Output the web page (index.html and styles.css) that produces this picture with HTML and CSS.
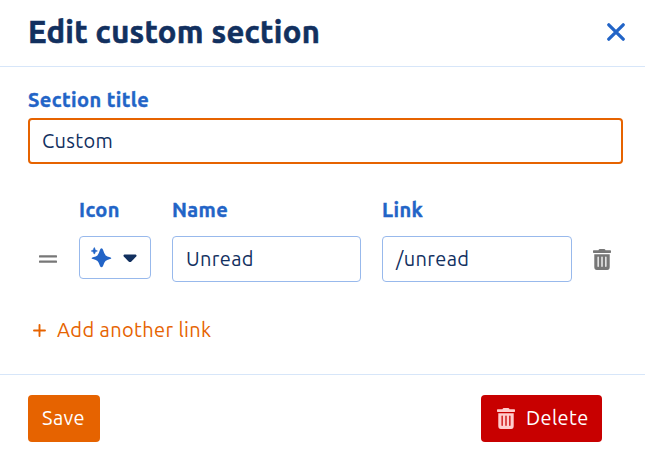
FILE: index.html
```html
<!DOCTYPE html>
<html lang="en">
<head>
<meta charset="utf-8">
<title>Edit custom section</title>
<link rel="stylesheet" href="styles.css">
</head>
<body>
<svg class="defs" width="0" height="0" aria-hidden="true">
  <symbol id="trash" viewBox="0 0 448 512" preserveAspectRatio="none"><path d="M32 440a64 72 0 0 0 64 72h256a64 72 0 0 0 64-72V128H32zm272-242a16 16 0 0 1 32 0v224a16 16 0 0 1-32 0zm-96 0a16 16 0 0 1 32 0v224a16 16 0 0 1-32 0zm-96 0a16 16 0 0 1 32 0v224a16 16 0 0 1-32 0zM432 32H312l-9.400-18.700A24 24 0 0 0 281.100 0H166.800a23.720 23.720 0 0 0-21.400 13.300L136 32H16A16 16 0 0 0 0 48v32a16 16 0 0 0 16 16h416a16 16 0 0 0 16-16V48a16 16 0 0 0-16-16z"/></symbol>
</svg>
<div class="modal">
  <header class="header">
    <h1>Edit custom section</h1>
    <button class="close" aria-label="Close"><svg width="18" height="18" viewBox="0 0 17 17"><path d="M1.700 1.700l13.600 13.600M15.300 1.700L1.700 15.300"/></svg></button>
  </header>
  <main class="body">
    <label class="label">Section title</label>
    <div class="input focused">Custom</div>
    <div class="grid">
      <span></span>
      <span class="label">Icon</span>
      <span class="label">Name</span>
      <span class="label">Link</span>
      <span></span>
      <svg class="drag" width="18" height="8" viewBox="0 0 18 8"><path d="M1 1.400h16M1 6.600h16"/></svg>
      <button class="picker">
        <svg width="22" height="21" viewBox="0 0 22 21"><path class="spark" d="M11.500 1.200Q12.600 1.200 13 2.800Q14.300 7.300 15.800 8.500Q16.900 9.500 20 10.300Q21.300 10.800 21.300 11.200Q21.300 11.600 20 12.100Q16.900 12.900 15.500 14.100Q14.400 15.100 13 19Q12.400 20.300 11.500 20.300Q10.500 20.300 10 19Q8.600 15.100 7.500 14.100Q6.300 12.900 3 12.100Q1.600 11.600 1.600 11.200Q1.600 10.800 3 10.300Q6.300 9.500 7.400 8.400Q8.700 7.300 10 2.800Q10.400 1.200 11.500 1.200Z"/><path class="spark small" d="M4.300.6Q4.800.6 5 2L5.400 3.100L7.200 3.700Q7.800 4 7.200 4.300L5.400 4.800L5 6.500Q4.300 7.300 3.700 6.500L3.200 4.800L1.400 4.300Q.8 4 1.400 3.700L3.200 3.100L3.700 1.500Q3.900.6 4.300.6Z"/></svg>
        <svg class="caret" width="14" height="9" viewBox="0 0 14 9"><path d="M1.400.5h11.200q1.600.6.6 2.100L8.400 7.500q-1.400 1-2.800 0L.8 2.600Q-.2 1.100 1.400.5z"/></svg>
      </button>
      <div class="input">Unread</div>
      <div class="input">/unread</div>
      <button class="remove" aria-label="Remove"><svg class="trash" width="18" height="21"><use href="#trash"/></svg></button>
    </div>
    <button class="add"><svg width="13" height="13" viewBox="0 0 13 13"><path d="M6.500 1v11M1 6.500h11"/></svg><span>Add another link</span></button>
  </main>
  <footer class="footer">
    <button class="btn save">Save</button>
    <button class="btn delete"><svg class="trash" width="18" height="21"><use href="#trash"/></svg><span>Delete</span></button>
  </footer>
</div>
</body>
</html>
```
FILE: styles.css
```css
* { box-sizing: border-box; }
body { margin: 0; background: #fff; color: #12305f; font: 20px/24px Ubuntu, "Noto Sans", sans-serif; letter-spacing: .38px; }
button { font: inherit; letter-spacing: inherit; border: 0; background: none; padding: 0; }
svg { display: block; flex: none; }
.defs { position: absolute; }
.modal { width: 645px; height: 459px; display: flex; flex-direction: column; }
.header { height: 67px; border-bottom: 1px solid #d7e6f9; display: flex; justify-content: space-between; align-items: center; padding: 0 20px 3px 28px; }
h1 { margin: 0; font-size: 31px; line-height: 36px; font-weight: 700; letter-spacing: .32px; white-space: nowrap; -webkit-text-stroke: .6px #12305f; }
.close { stroke: #2264c7; stroke-width: 3.100; stroke-linecap: round; fill: none; }
.body { height: 307px; padding: 21px 22px 0 28px; }
.label { display: block; font-weight: 700; color: #2264c7; letter-spacing: .42px; white-space: nowrap; -webkit-text-stroke: .4px #2264c7; }
.input { height: 46px; border: 1px solid #98b9ec; border-radius: 4px; display: flex; align-items: center; padding: 0 13px 1px; white-space: nowrap; }
.focused { border: 2px solid #e66300; margin-top: 6px; padding-left: 12px; }
.grid { display: grid; grid-template-columns: 51px 93px 210px 211px 1fr; grid-template-rows: 24px 46px; row-gap: 14px; margin-top: 34px; }
.grid .input { margin-right: 21px; }
.drag { margin: 19px 0 0 11px; stroke: #777; stroke-width: 2.400; stroke-linecap: round; }
.picker { width: 72px; height: 43px; border: 1px solid #98b9ec; border-radius: 4px; display: flex; align-items: center; padding: 0 0 1px 10px; gap: 11px; }
.spark { fill: #2264c7; }
.small { stroke: #2264c7; stroke-width: .4; }
.caret { fill: #12305f; margin-top: 3px; }
.trash { fill: #777; }
.remove { margin-top: 13px; align-self: start; justify-self: start; }
.add { margin: 36px 0 0 5px; display: flex; align-items: center; gap: 11px; color: #e66300; white-space: nowrap; }
.add svg { stroke: #e66300; stroke-width: 1.900; stroke-linecap: round; }
.footer { height: 85px; border-top: 1px solid #d7e6f9; display: flex; justify-content: space-between; padding: 20px 43px 0 28px; }
.btn { height: 47px; border-radius: 4px; color: #fff; display: flex; align-items: center; white-space: nowrap; }
.save { width: 72px; background: #e66300; padding: 0 14px 1px; }
.delete { width: 121px; background: #c80000; padding: 0 0 1px 16px; gap: 11px; }
.delete .trash { fill: #ffcdcd; margin-top: 1px; }
```
